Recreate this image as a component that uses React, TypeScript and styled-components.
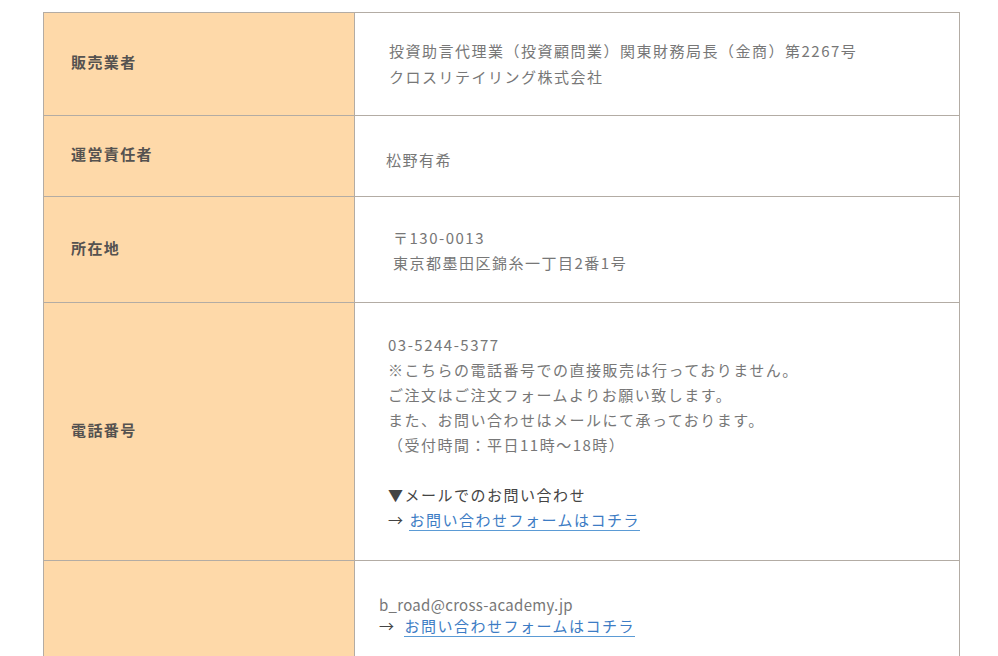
import React from 'react';
import styled, { createGlobalStyle } from 'styled-components';

const Global = createGlobalStyle`
  html, body { margin: 0; padding: 0; background: #ffffff; }
  body { font-family: "Noto Sans CJK JP", "Noto Sans", sans-serif; }
`;

const Page = styled.div`
  padding: 12px 0 0 43px;
`;

const Table = styled.table`
  width: 917px;
  border-collapse: collapse;
  table-layout: fixed;
`;

const Row = styled.tr<{ $h: number }>`
  height: ${(p) => p.$h}px;
`;

const Head = styled.th`
  width: 283px;
  background: #fed9a9;
  border: 1px solid #b3aca4;
  text-align: left;
  vertical-align: middle;
  padding: 0 0 5px 27px;
  font-size: 15px;
  font-weight: 700;
  color: #555250;
  letter-spacing: 1.4px;
`;

const Cell = styled.td<{ $indent: number; $lh?: number }>`
  border: 1px solid #b3aca4;
  vertical-align: middle;
  padding: 0 10px 0 ${(p) => p.$indent}px;
  font-size: 15px;
  line-height: ${(p) => p.$lh ?? 25}px;
  color: #777777;
  letter-spacing: 1.5px;
`;

const Strong = styled.span`
  color: #444444;
`;

const Arrow = styled.span<{ $gap: number }>`
  color: #444444;
  margin-right: ${(p) => p.$gap}px;
`;

const Email = styled.span`
  letter-spacing: 0.3px;
`;

const FormLink = styled.a`
  color: #3d7cc4;
  text-decoration: none;
  border-bottom: 1px solid #5b9bd5;
`;

export default function App() {
  return (
    <>
      <Global />
      <Page>
        <Table>
          <tbody>
            <Row $h={103}>
              <Head>販売業者</Head>
              <Cell $indent={34} $lh={26}>
                投資助言代理業（投資顧問業）関東財務局長（金商）第2267号
                <br />
                クロスリテイリング株式会社
              </Cell>
            </Row>
            <Row $h={81}>
              <Head>運営責任者</Head>
              <Cell $indent={31} style={{ paddingTop: 6 }}>
                松野有希
              </Cell>
            </Row>
            <Row $h={106}>
              <Head>所在地</Head>
              <Cell $indent={38}>
                〒130-0013
                <br />
                東京都墨田区錦糸一丁目2番1号
              </Cell>
            </Row>
            <Row $h={258}>
              <Head>電話番号</Head>
              <Cell $indent={33} $lh={25}>
                03-5244-5377
                <br />
                ※こちらの電話番号での直接販売は行っておりません。
                <br />
                ご注文はご注文フォームよりお願い致します。
                <br />
                また、お問い合わせはメールにて承っております。
                <br />
                （受付時間：平日11時～18時）
                <br />
                <br />
                <Strong>▼メールでのお問い合わせ</Strong>
                <br />
                <Arrow $gap={0}>→ </Arrow>
                <FormLink href="#">お問い合わせフォームはコチラ</FormLink>
              </Cell>
            </Row>
            <Row $h={109}>
              <Head></Head>
              <Cell $indent={24} $lh={21}>
                <Email>b_road@cross-academy.jp</Email>
                <br />
                <Arrow $gap={4}>→ </Arrow>
                <FormLink href="#">お問い合わせフォームはコチラ</FormLink>
              </Cell>
            </Row>
          </tbody>
        </Table>
      </Page>
    </>
  );
}
